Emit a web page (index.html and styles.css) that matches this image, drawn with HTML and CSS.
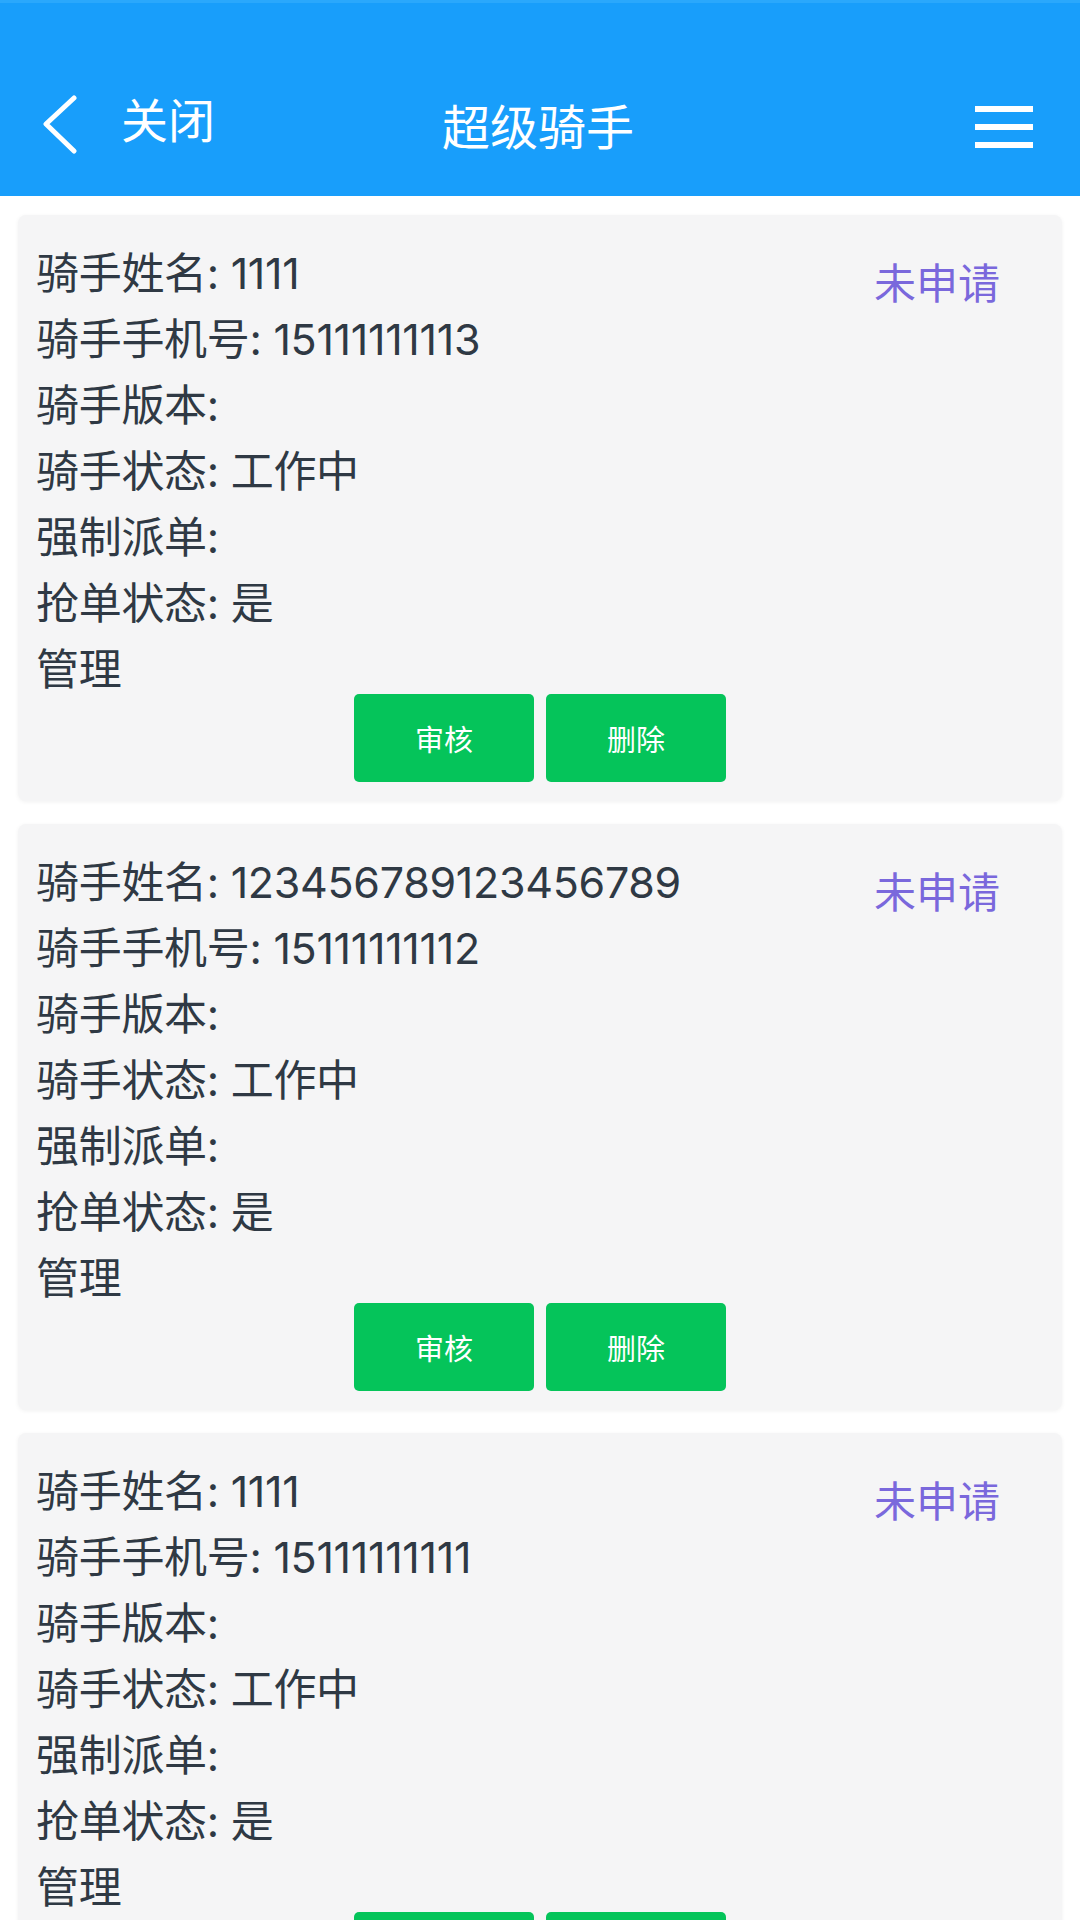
FILE: index.html
```html
<!DOCTYPE html>
<html lang="zh-CN">
<head>
<meta charset="utf-8">
<title>超级骑手</title>
<link rel="stylesheet" href="styles.css">
</head>
<body>
<header class="topbar">
  <div class="topbar-left">
    <svg class="back-icon" viewBox="0 0 36 60" width="36" height="60" aria-hidden="true">
      <path d="M31 3 L3 29 L31 56" fill="none" stroke="#fff" stroke-width="5" stroke-linecap="round" stroke-linejoin="round"/>
    </svg>
    <span class="close-text">关闭</span>
  </div>
  <div class="topbar-title">超级骑手</div>
  <div class="topbar-right">
    <div class="menu-icon"><span></span><span></span><span></span></div>
  </div>
</header>

<main class="list">
  <section class="card">
    <div class="card-body">
      <div class="info">
        <div class="line">骑手姓名: 1111</div>
        <div class="line">骑手手机号: 15111111113</div>
        <div class="line">骑手版本:</div>
        <div class="line">骑手状态: 工作中</div>
        <div class="line">强制派单:</div>
        <div class="line">抢单状态: 是</div>
        <div class="line">管理</div>
      </div>
      <div class="status">未申请</div>
    </div>
    <div class="actions">
      <button class="btn">审核</button>
      <button class="btn">删除</button>
    </div>
  </section>

  <section class="card">
    <div class="card-body">
      <div class="info">
        <div class="line">骑手姓名: 123456789123456789</div>
        <div class="line">骑手手机号: 15111111112</div>
        <div class="line">骑手版本:</div>
        <div class="line">骑手状态: 工作中</div>
        <div class="line">强制派单:</div>
        <div class="line">抢单状态: 是</div>
        <div class="line">管理</div>
      </div>
      <div class="status">未申请</div>
    </div>
    <div class="actions">
      <button class="btn">审核</button>
      <button class="btn">删除</button>
    </div>
  </section>

  <section class="card">
    <div class="card-body">
      <div class="info">
        <div class="line">骑手姓名: 1111</div>
        <div class="line">骑手手机号: 15111111111</div>
        <div class="line">骑手版本:</div>
        <div class="line">骑手状态: 工作中</div>
        <div class="line">强制派单:</div>
        <div class="line">抢单状态: 是</div>
        <div class="line">管理</div>
      </div>
      <div class="status">未申请</div>
    </div>
    <div class="actions">
      <button class="btn">审核</button>
      <button class="btn">删除</button>
    </div>
  </section>
</main>
</body>
</html>
```

FILE: styles.css
```css
* { box-sizing: border-box; }

html, body {
  margin: 0;
  padding: 0;
  background: #ffffff;
  font-family: "Noto Sans CJK SC", "Noto Sans", sans-serif;
}

body {
  width: 1080px;
  overflow: hidden;
}

.topbar {
  height: 196px;
  background: #189efb;
  border-top: 3px solid #2aa8fc;
  padding: 47px 47px 0 43px;
  display: grid;
  grid-template-columns: 1fr auto 1fr;
  align-items: center;
  color: #ffffff;
}

.topbar-left {
  display: flex;
  align-items: center;
  gap: 42px;
  height: 146px;
}

.back-icon {
  display: block;
  margin-top: 4px;
}

.close-text {
  font-size: 47px;
  line-height: 1;
  margin-top: -12px;
}

.topbar-title {
  font-size: 48px;
  line-height: 1;
  margin-top: 2px;
}

.topbar-right {
  display: flex;
  justify-content: flex-end;
}

.menu-icon {
  width: 58px;
  display: flex;
  flex-direction: column;
  gap: 12px;
  margin-top: 8px;
}

.menu-icon span {
  display: block;
  height: 6px;
  background: #ffffff;
}

.list {
  padding: 19px 18px 0;
  display: flex;
  flex-direction: column;
  gap: 23px;
}

.card {
  background: #f5f5f6;
  border-radius: 8px;
  box-shadow: 0 1px 4px rgba(0, 0, 0, 0.06);
  padding: 23px 62px 19px 18px;
  flex-shrink: 0;
}

.card-body {
  display: flex;
  justify-content: space-between;
  align-items: flex-start;
}

.info {
  color: #2f3944;
  font-family: Inter, "Noto Sans CJK SC", sans-serif;
  font-size: 43px;
  line-height: 66px;
  letter-spacing: -0.3px;
  padding-top: 2px;
}

.line {
  white-space: nowrap;
}

.status {
  color: #7a68dc;
  font-size: 42px;
  line-height: 66px;
  margin-top: 10px;
  white-space: nowrap;
}

.actions {
  display: flex;
  justify-content: center;
  gap: 12px;
  margin-top: -8px;
  margin-left: 44px;
}

.btn {
  width: 180px;
  height: 88px;
  border: none;
  border-radius: 5px;
  background: #05c45a;
  color: #ffffff;
  font-family: "Noto Sans CJK SC", "Noto Sans", sans-serif;
  font-size: 29px;
  padding: 0;
}
```
